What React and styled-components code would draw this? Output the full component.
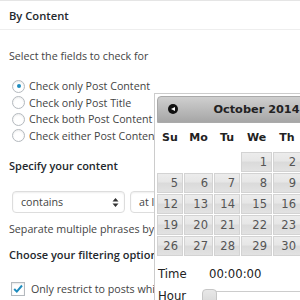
import React from 'react'
import styled, { createGlobalStyle } from 'styled-components'

const GlobalStyle = createGlobalStyle`
  html, body {
    margin: 0;
    padding: 0;
    background: #fff;
  }
  body {
    font-family: "Open Sans", "Liberation Sans", sans-serif;
    font-size: 10.7px;
    color: #444;
    width: 300px;
    height: 300px;
    overflow: hidden;
  }
`

const Page = styled.div`
  position: relative;
  width: 300px;
  height: 300px;
  overflow: hidden;
`

const Header = styled.div`
  height: 28px;
  display: flex;
  align-items: center;
  padding-left: 9px;
  border-top: 1px solid #e5e5e5;
  border-bottom: 1px solid #eee;
  font-size: 11.2px;
  font-weight: 600;
  color: #23282d;
`

const Section = styled.div`
  padding: 0 9px;
`

const Label = styled.div`
  margin-top: ${p => p.$mt}px;
  height: 18px;
  line-height: 18px;
  font-weight: ${p => (p.$bold ? 600 : 400)};
  font-size: ${p => (p.$bold ? '11px' : '10.7px')};
  color: ${p => (p.$bold ? '#23282d' : '#444')};
  white-space: nowrap;
`

const RadioList = styled.div`
  margin-top: 13px;
  padding-left: 3px;
`

const RadioRow = styled.div`
  height: 16.5px;
  display: flex;
  align-items: center;
  gap: 4px;
  white-space: nowrap;
`

const Radio = styled.span`
  width: 11px;
  height: 11px;
  border: 1px solid #b4b9be;
  border-radius: 50%;
  display: flex;
  align-items: center;
  justify-content: center;
  flex: none;
  box-shadow: inset 0 1px 2px rgba(0,0,0,0.08);
  &::after {
    content: '';
    display: ${p => (p.$checked ? 'block' : 'none')};
    width: 4px;
    height: 4px;
    border-radius: 50%;
    background: #1e8cbe;
  }
`

const SelectRow = styled.div`
  margin-top: 16px;
  display: flex;
  gap: 5px;
  padding-left: 3px;
`

const Select = styled.div`
  box-sizing: border-box;
  width: ${p => p.$w}px;
  height: 22px;
  border: 1px solid #ddd;
  border-radius: 4px;
  box-shadow: inset 0 1px 2px rgba(0,0,0,0.07);
  display: flex;
  align-items: center;
  justify-content: space-between;
  padding: 0 5px 0 8px;
  flex: none;
  white-space: nowrap;
`

const CheckRow = styled.div`
  margin-top: 18px;
  display: flex;
  align-items: center;
  gap: 6px;
  padding-left: 2px;
  white-space: nowrap;
`

const Checkbox = styled.span`
  width: 12px;
  height: 12px;
  border: 1px solid #b4b9be;
  box-shadow: inset 0 1px 2px rgba(0,0,0,0.1);
  display: flex;
  align-items: center;
  justify-content: center;
  flex: none;
`

const Calendar = styled.div`
  position: absolute;
  left: 154px;
  top: 93px;
  width: 199px;
  height: 230px;
  background: #fff;
  border: 1px solid #ccc;
  padding: 2px;
  font-family: "DejaVu Sans", Verdana, sans-serif;
  color: #222;
`

const CalHeader = styled.div`
  height: 25px;
  border: 1px solid #aaa;
  border-radius: 4px 0 0 0;
  background: linear-gradient(#cfcfcf, #a6a6a6);
  display: flex;
  align-items: center;
  justify-content: center;
  position: relative;
  font-size: 11.3px;
  font-weight: bold;
  color: #222;
`

const PrevIcon = styled.span`
  position: absolute;
  left: 10px;
  top: 7px;
  width: 10px;
  height: 10px;
  border-radius: 50%;
  background: #111;
  display: flex;
  align-items: center;
  justify-content: center;
  &::after {
    content: '';
    border-top: 2.5px solid transparent;
    border-bottom: 2.5px solid transparent;
    border-right: 4px solid #fff;
    margin-left: -1px;
  }
`

const Grid = styled.div`
  display: grid;
  grid-template-columns: 26px 29px 26px 31px 28px 27px 27px;
  grid-template-rows: 28px;
  grid-auto-rows: 20px;
  column-gap: 1px;
  row-gap: 1px;
`

const DayName = styled.div`
  display: flex;
  align-items: center;
  justify-content: center;
  font-size: 11px;
  font-weight: bold;
  white-space: nowrap;
`

const Day = styled.div`
  box-sizing: border-box;
  border: 1px solid ${p => (p.$empty ? 'transparent' : '#d3d3d3')};
  background: ${p => (p.$empty ? 'transparent' : 'linear-gradient(#ececec 0%, #e6e6e6 45%, #dadada 50%, #e2e2e2 100%)')};
  display: flex;
  align-items: center;
  justify-content: flex-end;
  padding-right: 4px;
  font-size: 11.5px;
  color: #555;
`

const TimeRow = styled.div`
  display: flex;
  align-items: center;
  height: 20px;
  font-size: 11.7px;
  color: #222;
  padding-left: 1px;
  margin-top: ${p => p.$mt}px;
`

const TimeLabel = styled.span`
  width: 51px;
  flex: none;
`

const Slider = styled.div`
  position: relative;
  flex: none;
  width: 120px;
  height: 9px;
  margin-left: -7px;
  border: 1px solid #ccc;
  border-radius: 4px;
  background: #fff;
`

const Handle = styled.span`
  position: absolute;
  left: -1px;
  top: -3px;
  width: 13px;
  height: 14px;
  border: 1px solid #c6c6c6;
  border-radius: 4px;
  background: linear-gradient(#e8e8e8, #d8d8d8);
`

const SelectArrows = () => (
  <svg width="7" height="11" viewBox="0 0 7 11">
    <path d="M3.5 1 L6.5 4.5 H0.5 Z M3.5 10 L6.5 6.5 H0.5 Z" fill="#333" />
  </svg>
)

const CheckMark = () => (
  <svg width="12" height="12" viewBox="0 0 12 12">
    <path d="M2.2 6 L4.8 8.6 L10 2.5" stroke="#1e8cbe" strokeWidth="2" fill="none" />
  </svg>
)

const radios = [
  'Check only Post Content',
  'Check only Post Title',
  'Check both Post Content and Post Title',
  'Check either Post Content or Post Title',
]

const days = [null, null, null, 1, 2, 3, 4, 5, 6, 7, 8, 9, 10, 11, 12, 13, 14, 15, 16, 17, 18, 19, 20, 21, 22, 23, 24, 25, 26, 27, 28, 29, 30, 31]

const App = () => (
  <Page>
    <GlobalStyle />
    <Header>By Content</Header>
    <Section>
      <Label $mt={17}>Select the fields to check for</Label>
      <RadioList>
        {radios.map((r, i) => (
          <RadioRow key={r}>
            <Radio $checked={i === 0} />
            {r}
          </RadioRow>
        ))}
      </RadioList>
      <Label $mt={13} $bold>Specify your content</Label>
      <SelectRow>
        <Select $w={113}>contains<SelectArrows /></Select>
        <Select $w={100}>at least one</Select>
      </SelectRow>
      <Label $mt={7}>Separate multiple phrases by commas</Label>
      <Label $mt={8} $bold>Choose your filtering options</Label>
      <CheckRow>
        <Checkbox><CheckMark /></Checkbox>
        Only restrict to posts which are published
      </CheckRow>
    </Section>
    <Calendar>
      <CalHeader>
        <PrevIcon />
        October 2014
      </CalHeader>
      <Grid>
        {['Su', 'Mo', 'Tu', 'We', 'Th', 'Fr', 'Sa'].map(d => <DayName key={d}>{d}</DayName>)}
        {days.map((d, i) => <Day key={i} $empty={d === null}>{d}</Day>)}
      </Grid>
      <TimeRow $mt={8}><TimeLabel>Time</TimeLabel>00:00:00</TimeRow>
      <TimeRow $mt={2}><TimeLabel>Hour</TimeLabel><Slider><Handle /></Slider></TimeRow>
    </Calendar>
  </Page>
)

export default App
